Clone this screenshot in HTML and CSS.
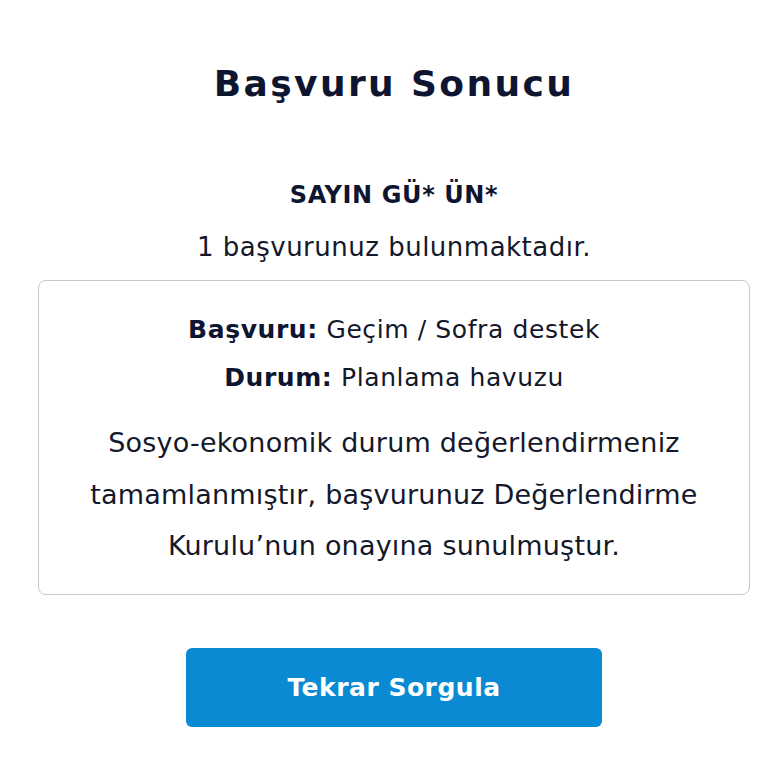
FILE: index.html
```html
<!DOCTYPE html>
<html lang="tr">
<head>
<meta charset="utf-8">
<title>Başvuru Sonucu</title>
<link rel="stylesheet" href="styles.css">
</head>
<body>
<main class="page">
  <h1 class="title">Başvuru Sonucu</h1>
  <p class="name">SAYIN GÜ* ÜN*</p>
  <p class="count">1 başvurunuz bulunmaktadır.</p>
  <section class="card">
    <p class="row"><strong>Başvuru:</strong> Geçim / Sofra destek</p>
    <p class="row"><strong>Durum:</strong> Planlama havuzu</p>
    <p class="desc">Sosyo-ekonomik durum değerlendirmeniz tamamlanmıştır, başvurunuz Değerlendirme Kurulu’nun onayına sunulmuştur.</p>
  </section>
  <div class="actions">
    <button class="btn" type="button">Tekrar Sorgula</button>
  </div>
</main>
</body>
</html>
```

FILE: styles.css
```css
html, body {
  margin: 0;
  padding: 0;
  background: #ffffff;
}

body {
  font-family: "DejaVu Sans", "Liberation Sans", sans-serif;
  color: #14182b;
}

.page {
  width: 712px;
  margin-left: 38px;
  padding-top: 64px;
  text-align: center;
}

.title {
  margin: 0;
  font-size: 36px;
  line-height: 40px;
  font-weight: 700;
  letter-spacing: 2.4px;
  color: #0e1530;
}

.name {
  margin: 71px 0 0;
  font-size: 24px;
  line-height: 40px;
  font-weight: 700;
  letter-spacing: 0.6px;
  color: #0e1530;
}

.count {
  margin: 12px 0 0;
  font-size: 26px;
  line-height: 40px;
  letter-spacing: 0.5px;
}

.card {
  margin-top: 13px;
  border: 1.5px solid #c8c8c8;
  border-radius: 8px;
  padding: 25px 18px 22px;
}

.row {
  margin: 0;
  font-size: 25px;
  line-height: 48px;
  letter-spacing: 0.6px;
}

.row strong {
  font-weight: 700;
  color: #0e1530;
}

.desc {
  margin: 15px 0 0;
  font-size: 27px;
  line-height: 51.5px;
  letter-spacing: 0.2px;
}

.actions {
  display: flex;
  justify-content: center;
  margin-top: 53px;
}

.btn {
  width: 416px;
  height: 79px;
  border: none;
  border-radius: 6px;
  background: #0a8ad3;
  color: #ffffff;
  font-family: "DejaVu Sans", "Liberation Sans", sans-serif;
  font-size: 25px;
  font-weight: 700;
  letter-spacing: 0.5px;
}
```
